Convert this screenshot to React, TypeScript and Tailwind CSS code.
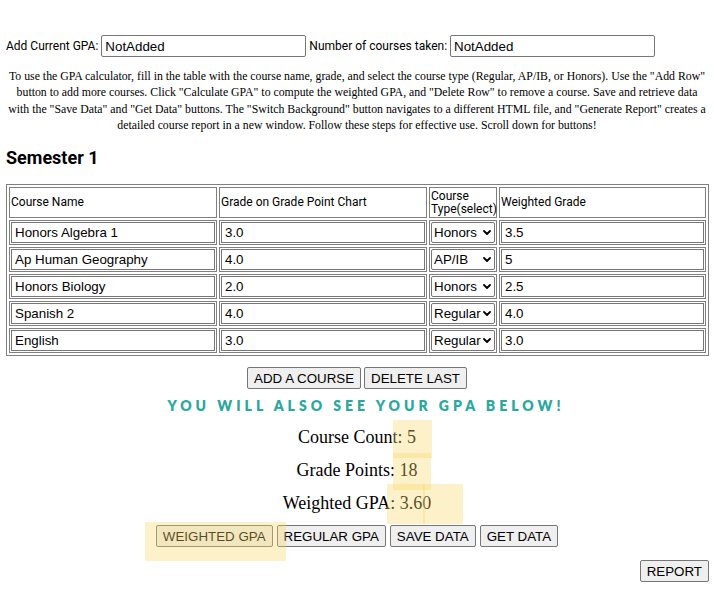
import React from "react";

const rows = [
  { name: "Honors Algebra 1", grade: "3.0", type: "Honors", weighted: "3.5" },
  { name: "Ap Human Geography", grade: "4.0", type: "AP/IB", weighted: "5" },
  { name: "Honors Biology", grade: "2.0", type: "Honors", weighted: "2.5" },
  { name: "Spanish 2", grade: "4.0", type: "Regular", weighted: "4.0" },
  { name: "English", grade: "3.0", type: "Regular", weighted: "3.0" },
];

const sans = "font-['Roboto',sans-serif]";
const ctrl = "font-['Liberation_Sans',Arial,sans-serif] text-[13.33px]";
const btn =
  "h-[22px] px-[6px] border border-[#767676] rounded-[2px] bg-[#efefef] text-black leading-none " +
  ctrl;
const cellInput =
  "block w-full h-[21px] px-[3px] border border-[#767676] bg-white text-black outline-none " + ctrl;

function Highlight({ className }: { className: string }) {
  return <div className={"absolute pointer-events-none bg-[#fad664]/35 " + className} />;
}

function TypeSelect({ value }: { value: string }) {
  return (
    <div className="relative w-[64px] h-[21px]">
      <select
        value={value}
        onChange={() => {}}
        className={
          "block appearance-none w-full h-full pl-[2px] pr-[12px] border border-[#767676] rounded-[2px] bg-white text-black " +
          ctrl
        }
      >
        <option>Regular</option>
        <option>AP/IB</option>
        <option>Honors</option>
      </select>
      <svg
        className="absolute right-[4px] top-[8px] pointer-events-none"
        width="8"
        height="5"
        viewBox="0 0 8 5"
      >
        <path d="M1 1 L4 4 L7 1" fill="none" stroke="#000" strokeWidth="1.8" strokeLinecap="round" strokeLinejoin="round" />
      </svg>
    </div>
  );
}

export default function App() {
  return (
    <div className="relative w-[714px] min-h-[591px] bg-white pt-[35px] font-['Liberation_Serif',serif] text-black">
      <div className={"flex items-center h-[22px] pl-[6px] text-[12px] " + sans}>
        <span>Add Current GPA:</span>
        <input
          readOnly
          value="NotAdded"
          className={"ml-[3px] w-[205px] h-[22px] px-[3px] border border-[#767676] rounded-[2px] " + ctrl}
        />
        <span className="ml-[3px]">Number of courses taken:</span>
        <input
          readOnly
          value="NotAdded"
          className={"ml-[3px] w-[205px] h-[22px] px-[3px] border border-[#767676] rounded-[2px] " + ctrl}
        />
      </div>

      <p className="mt-[11px] text-center text-[11.8px] leading-[16.3px] whitespace-nowrap">
        To use the GPA calculator, fill in the table with the course name, grade, and select the course type
        (Regular, AP/IB, or Honors). Use the "Add Row"
        <br />
        button to add more courses. Click "Calculate GPA" to compute the weighted GPA, and "Delete Row" to remove
        a course. Save and retrieve data
        <br />
        with the "Save Data" and "Get Data" buttons. The "Switch Background" button navigates to a different HTML
        file, and "Generate Report" creates a
        <br />
        detailed course report in a new window. Follow these steps for effective use. Scroll down for buttons!
      </p>

      <h2 className={"mt-[14px] pl-[6px] text-[18px] font-bold leading-[22px] " + sans}>Semester 1</h2>

      <div className="mt-[15px] px-[6px]">
        <table className="table-fixed w-[703px] border border-[#808080] border-separate border-spacing-[2px]">
          <thead>
            <tr className={"h-[31px] text-[12px] leading-[13px] text-left " + sans}>
              <th className="w-[208px] border border-[#808080] p-[1px] font-normal">Course Name</th>
              <th className="w-[208px] border border-[#808080] p-[1px] font-normal">Grade on Grade Point Chart</th>
              <th className="w-[68px] border border-[#808080] p-[1px] font-normal whitespace-nowrap">
                Course
                <br />
                Type(select)
              </th>
              <th className="border border-[#808080] p-[1px] font-normal">Weighted Grade</th>
            </tr>
          </thead>
          <tbody>
            {rows.map((r) => (
              <tr key={r.name}>
                <td className="border border-[#808080] p-[1px]">
                  <input readOnly value={r.name} className={cellInput} />
                </td>
                <td className="border border-[#808080] p-[1px]">
                  <input readOnly value={r.grade} className={cellInput} />
                </td>
                <td className="border border-[#808080] p-[1px]">
                  <TypeSelect value={r.type} />
                </td>
                <td className="border border-[#808080] p-[1px]">
                  <input readOnly value={r.weighted} className={cellInput} />
                </td>
              </tr>
            ))}
          </tbody>
        </table>
      </div>

      <div className="mt-[11px] flex justify-center gap-[3px]">
        <button className={btn}>ADD A COURSE</button>
        <button className={btn}>DELETE LAST</button>
      </div>

      <div className="mt-[9px] pl-[18px] text-center font-['Lato',sans-serif] font-extrabold text-[14px] leading-[16px] tracking-[4px] text-[#2aa8a0]">
        YOU WILL ALSO SEE YOUR GPA BELOW!
      </div>

      <div className="mt-[7px] text-center text-[18px] leading-[33px]">
        <div>Course Count: 5</div>
        <div>Grade Points: 18</div>
        <div>Weighted GPA: 3.60</div>
      </div>

      <div className="mt-[5px] flex justify-center gap-[4px]">
        <button className={btn}>WEIGHTED GPA</button>
        <button className={btn}>REGULAR GPA</button>
        <button className={btn}>SAVE DATA</button>
        <button className={btn}>GET DATA</button>
      </div>

      <div className="mt-[13px] flex justify-end pr-[5px]">
        <button className={btn}>REPORT</button>
      </div>

      <Highlight className="left-[393px] top-[420px] w-[39px] h-[38px]" />
      <Highlight className="left-[393px] top-[453px] w-[38px] h-[37px]" />
      <Highlight className="left-[387px] top-[484px] w-[38px] h-[40px]" />
      <Highlight className="left-[423px] top-[484px] w-[40px] h-[40px]" />
      <Highlight className="left-[145px] top-[522px] w-[141px] h-[39px]" />
    </div>
  );
}
